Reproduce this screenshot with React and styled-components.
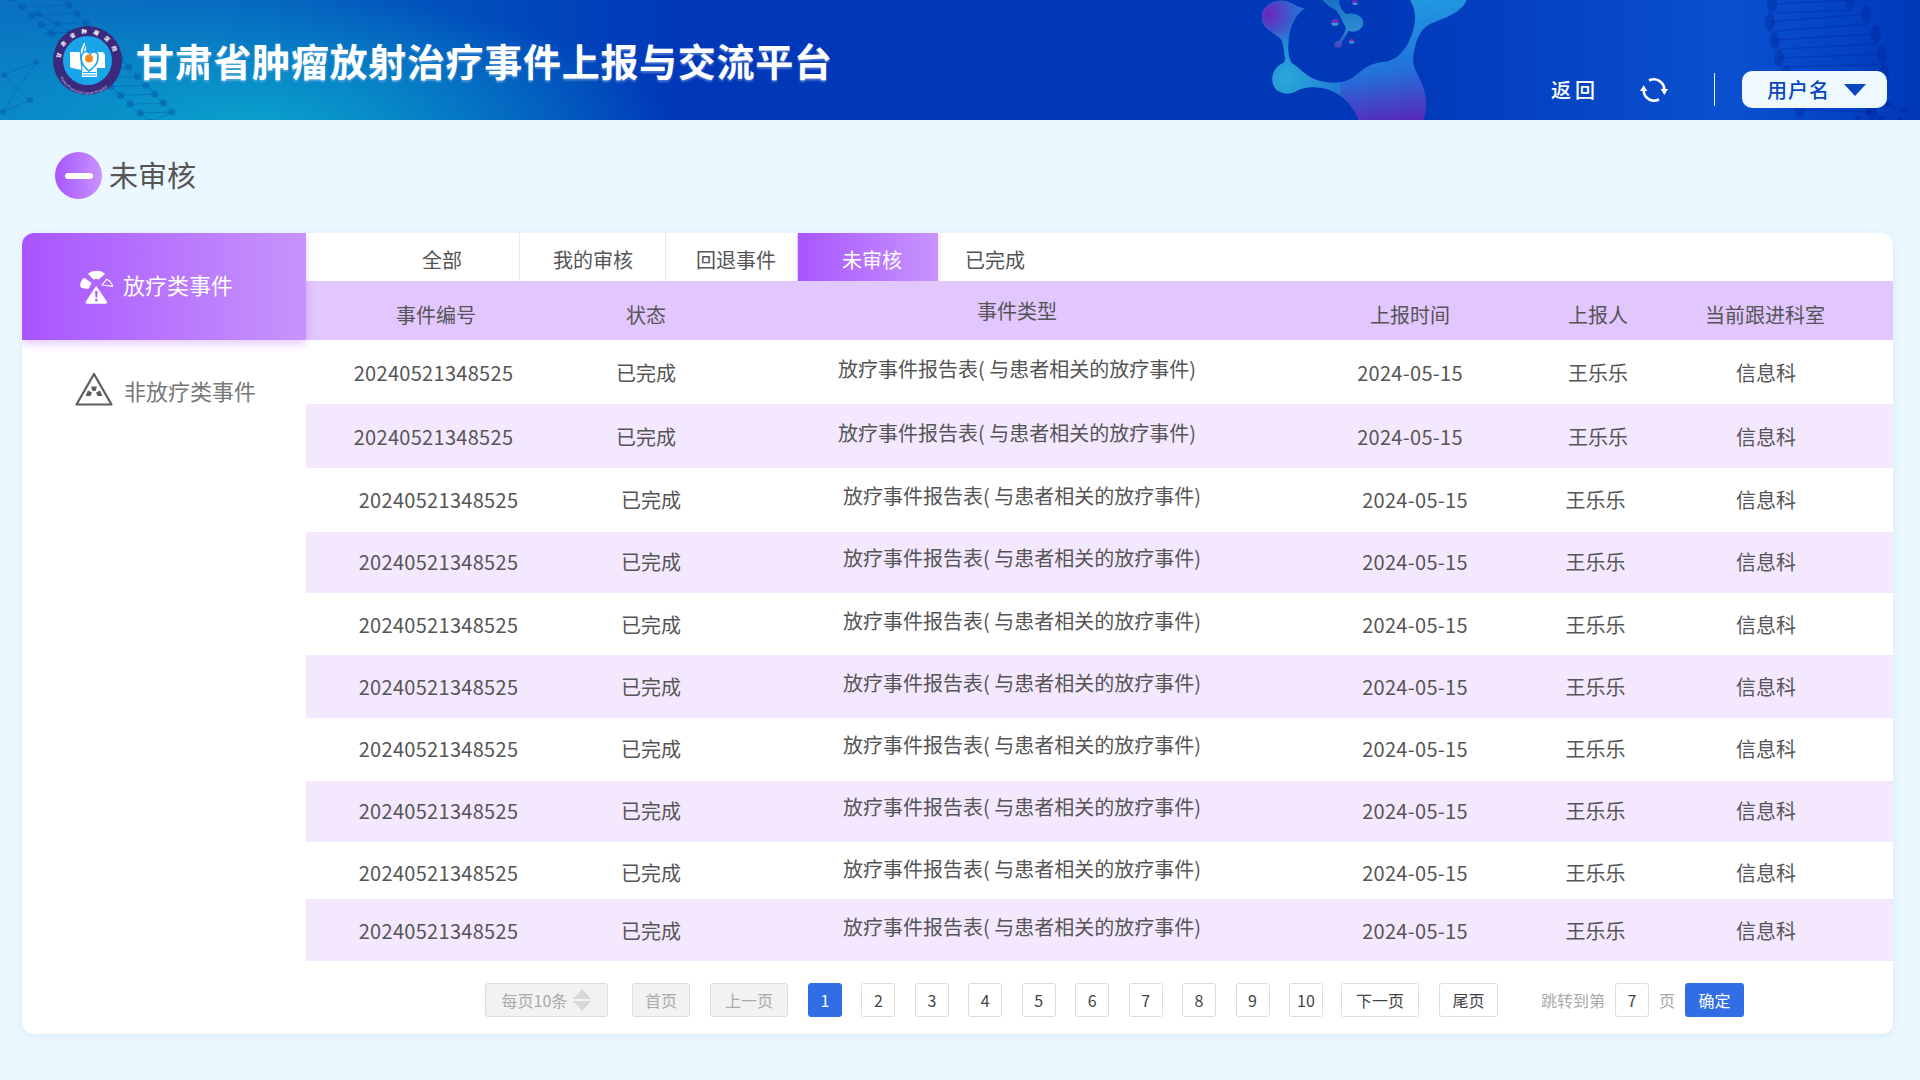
import React from "react";
import styled, { createGlobalStyle } from "styled-components";

const Global = createGlobalStyle`
  html, body { margin: 0; padding: 0; background: #ecf8ff; }
  body { font-family: "Noto Sans CJK SC", "Noto Sans", sans-serif; color: #555; }
  * { box-sizing: border-box; }
`;

const Page = styled.div`
  width: 1920px;
  height: 1080px;
  background: #ecf8ff;
  overflow: hidden;
  display: flex;
  flex-direction: column;
`;

const Header = styled.header`
  position: relative;
  height: 120px;
  flex: none;
  display: flex;
  align-items: center;
  justify-content: space-between;
  padding: 0 33px 0 53px;
  overflow: hidden;
  background:
    radial-gradient(ellipse 420px 130px at 250px 125px, rgba(10, 165, 205, 0.95) 0%, rgba(10, 150, 200, 0) 100%),
    linear-gradient(90deg, #0a74c2 0, #0566bf 260px, #0048bb 520px, #0038b8 680px, #0038b8 1380px, #0a50ce 1730px, #0549ca 1800px, #0038b8 1920px);
`;

const HeaderArt = styled.svg`
  position: absolute;
  left: 0;
  top: 0;
  width: 1920px;
  height: 120px;
`;

const Brand = styled.div`
  position: relative;
  display: flex;
  align-items: center;
  gap: 14px;
`;

const Title = styled.h1`
  margin: 0;
  font-size: 38px;
  line-height: 50px;
  font-weight: 700;
  letter-spacing: 0.7px;
  color: #fff;
  text-shadow: 0 2px 2px rgba(210, 220, 255, 0.35);
`;

const HeaderActions = styled.div`
  position: relative;
  align-self: flex-end;
  display: flex;
  align-items: center;
  height: 37px;
  margin-bottom: 12px;
`;

const BackLink = styled.span`
  width: 89px;
  color: #fff;
  font-size: 20px;
  letter-spacing: 4px;
  font-weight: 500;
`;

const Divider = styled.span`
  width: 1px;
  height: 33px;
  margin: 0 27px 0 46px;
  background: #eaf4ff;
`;

const UserButton = styled.button`
  width: 145px;
  height: 37px;
  border: 0;
  border-radius: 10px;
  background: #eef8ff;
  color: #0b46b8;
  font: 500 20px "Noto Sans CJK SC", sans-serif;
  letter-spacing: 1px;
  display: flex;
  align-items: center;
  padding: 0 0 0 25px;
  gap: 14px;
`;

const Caret = styled.span`
  width: 0;
  height: 0;
  border-left: 11px solid transparent;
  border-right: 11px solid transparent;
  border-top: 12px solid #0b46c0;
`;

const PageHead = styled.div`
  height: 113px;
  flex: none;
  display: flex;
  align-items: center;
  padding: 0 0 2px 55px;
  gap: 7px;
`;

const MinusBadge = styled.span`
  width: 47px;
  height: 47px;
  border-radius: 50%;
  background: linear-gradient(90deg, #a855ff, #c794fb);
  display: flex;
  align-items: center;
  justify-content: center;
  &::after {
    content: "";
    width: 28px;
    height: 6px;
    border-radius: 3px;
    background: #fff;
  }
`;

const PageTitle = styled.h2`
  margin: 0 0 3px;
  font-size: 29px;
  font-weight: 400;
  color: #555;
`;

const Card = styled.main`
  width: 1871px;
  height: 801px;
  margin-left: 22px;
  background: #fff;
  border-radius: 12px;
  box-shadow: 0 2px 8px rgba(120, 170, 230, 0.18);
  display: flex;
  overflow: hidden;
`;

const Sidebar = styled.nav`
  width: 284px;
  flex: none;
`;

const SideItem = styled.div`
  position: relative;
  z-index: 1;
  height: ${(p) => (p.$active ? "107px" : "99px")};
  display: flex;
  align-items: center;
  padding-left: ${(p) => (p.$active ? "57px" : "53px")};
  gap: ${(p) => (p.$active ? "9px" : "11px")};
  font-size: 22px;
  color: ${(p) => (p.$active ? "#fff" : "#777")};
  background: ${(p) => (p.$active ? "linear-gradient(90deg, #a855ff, #c794fb)" : "transparent")};
  box-shadow: ${(p) => (p.$active ? "0 4px 8px rgba(168, 85, 255, 0.3)" : "none")};
`;

const SideLabel = styled.span`
  margin-bottom: ${(p) => (p.$lift ? `${p.$lift}px` : "0")};
`;

const Content = styled.section`
  flex: 1;
  min-width: 0;
  display: flex;
  flex-direction: column;
`;

const Tabs = styled.div`
  height: 48px;
  flex: none;
  display: flex;
`;

const Tab = styled.div`
  width: ${(p) => p.$w}px;
  padding-left: ${(p) => p.$pad}px;
  padding-top: 5px;
  display: flex;
  align-items: center;
  font-size: 20px;
  color: ${(p) => (p.$active ? "#fff" : "#555")};
  border-right: ${(p) => (p.$active || p.$last ? "0" : "1px solid #e0eaf5")};
  background: ${(p) => (p.$active ? "linear-gradient(90deg, #a855ff, #c794fb)" : "transparent")};
  box-shadow: ${(p) => (p.$active ? "0 2px 6px rgba(168, 85, 255, 0.25)" : "none")};
`;

const Row = styled.div`
  height: ${(p) => p.$h}px;
  display: grid;
  grid-template-columns: 255px 170px 572px 214px 164px 166px 46px;
  align-items: center;
  font-size: 20px;
  color: #555;
  background: ${(p) => (p.$head ? "#e2c6fe" : p.$alt ? "#f4e8ff" : "#fff")};
  padding-top: ${(p) => (p.$head ? "8px" : p.$dy > 0 ? `${p.$dy * 2}px` : "0")};
  padding-bottom: ${(p) => (p.$dy < 0 ? `${-p.$dy * 2}px` : "0")};
`;

const Cell = styled.div`
  text-align: center;
  white-space: nowrap;
  padding-left: ${(p) => (p.$shift ? "10px" : "0")};
  margin-left: ${(p) => (p.$nudge ? `${p.$nudge}px` : "0")};
`;

const NumberCell = styled(Cell)`
  letter-spacing: 0.3px;
`;

const TypeCell = styled(Cell)`
  padding-bottom: ${(p) => (p.$head ? "9px" : "8px")};
`;

const Pager = styled.div`
  flex: 1;
  display: flex;
  align-items: flex-start;
  padding: 22px 0 0 179px;
  font-size: 16px;
  gap: 20px;
`;

const PageNumbers = styled.div`
  display: flex;
  gap: 19.45px;
`;

const PageBtn = styled.span`
  height: 34px;
  min-width: 34px;
  width: ${(p) => (p.$w ? `${p.$w}px` : "34px")};
  margin-left: ${(p) => (p.$ml ? `${p.$ml}px` : "0")};
  display: flex;
  align-items: center;
  justify-content: center;
  gap: 6px;
  border-radius: 3px;
  border: 1px solid ${(p) => (p.$active ? "#316ee6" : "#ddd")};
  background: ${(p) => (p.$active ? "#316ee6" : p.$off ? "#f2f2f2" : "#fff")};
  color: ${(p) => (p.$active ? "#fff" : p.$off ? "#aaa" : "#444")};
`;

const SelectArrows = styled.span`
  display: flex;
  flex-direction: column;
  gap: 2px;
  &::before,
  &::after {
    content: "";
    width: 0;
    height: 0;
    border-left: 9px solid transparent;
    border-right: 9px solid transparent;
  }
  &::before { border-bottom: 10px solid #d8d8d8; }
  &::after { border-top: 10px solid #d8d8d8; }
`;

const JumpLabel = styled.span`
  height: 34px;
  line-height: 34px;
  color: #aaa;
`;

const JumpGroup = styled.div`
  display: flex;
  gap: 10px;
  margin-left: 23px;
`;

const Confirm = styled.span`
  width: 59px;
  height: 34px;
  border-radius: 3px;
  background: #316ee6;
  color: #fff;
  display: flex;
  align-items: center;
  justify-content: center;
`;

const rows = [
  { h: 64, dy: 0 },
  { h: 64, dy: 0 },
  { h: 64, dy: -1 },
  { h: 61, dy: -1 },
  { h: 62, dy: 0 },
  { h: 63, dy: 0 },
  { h: 63, dy: -1 },
  { h: 61, dy: -1 },
  { h: 57, dy: 2 },
  { h: 62, dy: 0 },
];
const eventName = "放疗事件报告表( 与患者相关的放疗事件)";

const along = (x1, y1, x2, y2, n) =>
  Array.from({ length: n }, (_, i) => [x1 + ((x2 - x1) * i) / (n - 1), y1 + ((y2 - y1) * i) / (n - 1)]);

function Art() {
  const strandA = along(12, -2, 150, 122, 15);
  const strandB = along(60, -4, 172, 112, 14);
  const nodes = [[4, 75], [30, 100], [3, 112], [36, 62], [58, 24], [38, 14], [70, 32]];
  const rightA = [[1772, 4], [1770, 22], [1775, 40], [1779, 58], [1786, 74], [1792, 92], [1800, 110]];
  const rightB = [[1850, 0], [1866, 14], [1876, 34], [1882, 54], [1884, 74], [1880, 94], [1872, 112]];
  const netR = [[1868, 112], [1888, 104], [1905, 110], [1880, 119], [1900, 120], [1858, 118]];
  return (
    <HeaderArt viewBox="0 0 1920 120" aria-hidden="true">
      <defs>
        <linearGradient id="blobMain" gradientUnits="userSpaceOnUse" x1="520" y1="0" x2="570" y2="360">
          <stop offset="0" stopColor="#219ae0" />
          <stop offset="0.55" stopColor="#2272dc" />
          <stop offset="1" stopColor="#5a25b8" />
        </linearGradient>
        <radialGradient id="blobPurple" gradientUnits="userSpaceOnUse" cx="85" cy="40" r="110">
          <stop offset="0" stopColor="#6a25bc" />
          <stop offset="1" stopColor="#6a25bc" stopOpacity="0" />
        </radialGradient>
        <radialGradient id="blobTeal" gradientUnits="userSpaceOnUse" cx="140" cy="235" r="150">
          <stop offset="0" stopColor="#2aa8d8" />
          <stop offset="1" stopColor="#2aa8d8" stopOpacity="0" />
        </radialGradient>
        <linearGradient id="tealTop" x1="0" y1="0" x2="0" y2="1">
          <stop offset="0" stopColor="#1a6fc6" />
          <stop offset="0.6" stopColor="#2a8ccf" />
          <stop offset="1" stopColor="#4a3fc0" />
        </linearGradient>
        <linearGradient id="dropDot" x1="0" y1="0" x2="0" y2="1">
          <stop offset="0" stopColor="#7a2cc0" />
          <stop offset="0.5" stopColor="#7a2cc0" />
          <stop offset="0.55" stopColor="#3a9ad0" />
          <stop offset="1" stopColor="#3a9ad0" />
        </linearGradient>
        <clipPath id="blobClip">
          <path d="M66,50 C66,20 95,2 125,2 C160,4 170,25 195,25 C165,40 145,90 145,130 C143,150 145,175 155,190 C175,200 200,235 240,243 C290,256 330,245 360,215 C385,195 410,185 440,185 C480,175 505,140 520,90 C530,50 525,25 510,0 L680,0 C665,40 610,55 570,72 C535,90 520,140 520,190 C525,220 560,260 558,310 C558,330 555,350 552,360 L355,360 C340,320 310,285 270,270 C235,258 200,258 175,270 C155,282 130,285 110,270 C90,250 95,215 115,198 C125,190 135,190 135,180 C135,160 130,135 125,120 C105,95 66,90 66,50 Z" />
        </clipPath>
      </defs>

      <g fill="none" stroke="rgba(5,85,170,0.4)" strokeWidth="1">
        {strandA.map(([x, y], i) => {
          const [bx, by] = strandB[i] || strandB[strandB.length - 1];
          return <line key={i} x1={x} y1={y} x2={bx} y2={by} />;
        })}
        <polyline points={strandA.map((p) => p.join(",")).join(" ")} />
        <polyline points={strandB.map((p) => p.join(",")).join(" ")} />
        <polygon points="4,75 30,100 3,112 36,62" />
        <polygon points="38,14 58,24 46,34 70,32" />
      </g>
      <g fill="rgba(5,85,170,0.45)">
        {[...strandA, ...strandB].map(([x, y], i) => (
          <circle key={i} cx={x} cy={y} r="3.6" />
        ))}
        {nodes.map(([x, y], i) => (
          <circle key={i} cx={x} cy={y} r="3" />
        ))}
      </g>

      <g transform="translate(1240 0) scale(0.3333)">
        <g clipPath="url(#blobClip)">
          <rect x="0" y="0" width="700" height="360" fill="url(#blobMain)" />
          <rect x="0" y="0" width="300" height="360" fill="#1f7fd6" />
          <rect x="0" y="0" width="700" height="360" fill="url(#blobPurple)" />
          <rect x="0" y="0" width="700" height="360" fill="url(#blobTeal)" />
        </g>
        <path d="M248,0 L298,0 C296,15 305,30 318,42 C345,35 372,50 370,70 C368,92 340,100 325,92 C318,108 310,118 305,128 C310,140 296,148 286,142 C278,134 285,122 298,122 C308,110 314,98 318,85 C308,65 300,45 290,32 C278,24 258,15 248,0 Z" fill="url(#tealTop)" />
        <ellipse cx="345" cy="8" rx="8" ry="7" fill="url(#dropDot)" />
        <ellipse cx="285" cy="68" rx="11" ry="10" fill="url(#dropDot)" />
        <ellipse cx="335" cy="124" rx="8" ry="7" fill="url(#dropDot)" />
      </g>

      <g fill="none" stroke="rgba(0,30,140,0.28)" strokeWidth="1.5">
        {rightA.map(([x, y], i) => (
          <line key={i} x1={x} y1={y} x2={rightB[i][0]} y2={rightB[i][1]} />
        ))}
        {rightA.slice(0, 6).map(([x, y], i) => (
          <line key={i} x1={x + 6} y1={y + 9} x2={rightB[i][0] + 2} y2={rightB[i][1] + 10} />
        ))}
      </g>
      <g fill="rgba(0,30,140,0.3)">
        {[...rightA, ...rightB].map(([x, y], i) => (
          <ellipse key={i} cx={x} cy={y} rx="5" ry="9" />
        ))}
        {netR.map(([x, y], i) => (
          <circle key={i} cx={x} cy={y} r="3" />
        ))}
      </g>
      <polyline points="1868,112 1888,104 1905,110 1880,119 1888,104" fill="none" stroke="rgba(0,30,140,0.3)" />
    </HeaderArt>
  );
}

function Logo() {
  return (
    <svg width="69" height="69" viewBox="0 0 69 69" aria-hidden="true">
      <defs>
        <path id="ringTop" d="M7.5,34.5 A27,27 0 0 1 61.5,34.5" />
        <path id="ringBot" d="M4,38 A30.5,30.5 0 0 0 65,38" />
      </defs>
      <circle cx="34.5" cy="34.5" r="34.5" fill="#3b2a7c" />
      <text fontSize="5.4" fill="#fff" fontWeight="700" letterSpacing="6">
        <textPath href="#ringTop" startOffset="2">甘肃省肿瘤医院</textPath>
      </text>
      <text fontSize="3.6" fill="#cfd6f2">
        <textPath href="#ringBot" startOffset="14">Gansu Provincial Cancer Hospital</textPath>
      </text>
      <circle cx="34.5" cy="34.5" r="24.5" fill="#1aa4ea" />
      <path d="M17,26 H27 L31,17 H33 V26 H48 Q52,26 52,30 V42 H44 V51 H29 V44 L19,42 Q17,42 17,40 Z" fill="#fff" />
      <path d="M26.5,19 L29,44 M33,17 L30,26" stroke="#1aa4ea" strokeWidth="1.2" fill="none" />
      <path d="M36,45 C29,40 26,32 30,27 C33,24 36,26 37,28 C39,25 44,25 45,29 C46,35 42,41 36,45 Z" fill="#fff" stroke="#1aa4ea" strokeWidth="1.6" />
      <circle cx="36" cy="32.5" r="4" fill="#f28a22" />
      <path d="M30,46.5 H43 M30,49 H43" stroke="#1aa4ea" strokeWidth="1" />
    </svg>
  );
}

function RefreshIcon() {
  return (
    <svg width="28" height="26" viewBox="0 0 28 26" aria-hidden="true" style={{ flex: "none" }}>
      <path d="M19,22.5 A10.5,10.5 0 0 1 3.7,13 M9,3.5 A10.5,10.5 0 0 1 24.3,13" fill="none" stroke="#fff" strokeWidth="2.6" />
      <path d="M0,14 L7.4,14 L3.7,8.2 Z M20.6,12 L28,12 L24.3,18 Z" fill="#fff" />
    </svg>
  );
}

function ActiveIcon() {
  return (
    <svg width="35" height="34" viewBox="55 28 106 104" aria-hidden="true">
      <g fill="#fff">
        <path d="M82,40 C95,27 122,27 134,40 L114,58 C110,54 104,54 100,58 Z" />
        <path d="M58,76 C58,65 64,56 71,52 L93,68 L84,85 C72,85 60,85 58,76 Z" />
        <path d="M107,76 L140,125 Q141,131 136,131 L78,131 Q73,131 75,125 Z" />
      </g>
      <path d="M125,74 L139,56 C148,60 155,68 157,78 Z" fill="none" stroke="#fff" strokeWidth="3.4" strokeLinejoin="round" />
      <path d="M104,92 H111 L110,112 H105 Z" fill="#a855ff" />
      <circle cx="107.5" cy="120" r="4" fill="#a855ff" />
    </svg>
  );
}

function IdleIcon() {
  return (
    <svg width="38" height="35" viewBox="0 0 38 35" aria-hidden="true">
      <path d="M19,2 L36.5,32.5 H1.5 Z" fill="none" stroke="#5d5d5d" strokeWidth="2.2" strokeLinejoin="round" />
      <g fill="#5d5d5d">
        <path d="M16,14.5 H22 L20.5,19 H17.5 Z" />
        <path d="M10.5,24 H15.5 L17,20.5 L13,18.5 Z" />
        <path d="M27.5,24 H22.5 L21,20.5 L25,18.5 Z" />
      </g>
    </svg>
  );
}

export default function App() {
  return (
    <Page>
      <Global />
      <Header>
        <Art />
        <Brand>
          <Logo />
          <Title>甘肃省肿瘤放射治疗事件上报与交流平台</Title>
        </Brand>
        <HeaderActions>
          <BackLink>返回</BackLink>
          <RefreshIcon />
          <Divider />
          <UserButton>
            用户名
            <Caret />
          </UserButton>
        </HeaderActions>
      </Header>

      <PageHead>
        <MinusBadge />
        <PageTitle>未审核</PageTitle>
      </PageHead>

      <Card>
        <Sidebar>
          <SideItem $active>
            <ActiveIcon />
            <SideLabel $lift={5}>放疗类事件</SideLabel>
          </SideItem>
          <SideItem>
            <IdleIcon />
            <SideLabel>非放疗类事件</SideLabel>
          </SideItem>
        </Sidebar>
        <Content>
          <Tabs>
            <Tab $w={214} $pad={116}>全部</Tab>
            <Tab $w={146} $pad={33}>我的审核</Tab>
            <Tab $w={132} $pad={30}>回退事件</Tab>
            <Tab $w={140} $pad={44} $active>未审核</Tab>
            <Tab $w={200} $pad={27} $last>已完成</Tab>
          </Tabs>
          <Row $head $h={59}>
            <Cell $nudge={5}>事件编号</Cell>
            <Cell>状态</Cell>
            <TypeCell $head>事件类型</TypeCell>
            <Cell>上报时间</Cell>
            <Cell $nudge={-2}>上报人</Cell>
            <Cell $nudge={2}>当前跟进科室</Cell>
          </Row>
          {rows.map(({ h, dy }, i) => {
            const shift = i > 1;
            return (
              <Row key={i} $h={h} $dy={dy} $alt={i % 2 === 1}>
                <NumberCell $shift={shift}>20240521348525</NumberCell>
                <Cell $shift={shift}>已完成</Cell>
                <TypeCell $shift={shift}>{eventName}</TypeCell>
                <NumberCell $shift={shift}>2024-05-15</NumberCell>
                <Cell $nudge={shift ? -7 : -2}>王乐乐</Cell>
                <Cell $nudge={4}>信息科</Cell>
              </Row>
            );
          })}
          <Pager>
            <PageBtn $off $w={123}>
              每页10条
              <SelectArrows />
            </PageBtn>
            <PageBtn $off $w={58} $ml={4}>首页</PageBtn>
            <PageBtn $off $w={78}>上一页</PageBtn>
            <PageNumbers>
              {[1, 2, 3, 4, 5, 6, 7, 8, 9, 10].map((n) => (
                <PageBtn key={n} $active={n === 1}>{n}</PageBtn>
              ))}
            </PageNumbers>
            <PageBtn $w={78} $ml={-2}>下一页</PageBtn>
            <PageBtn $w={59}>尾页</PageBtn>
            <JumpGroup>
              <JumpLabel>跳转到第</JumpLabel>
              <PageBtn>7</PageBtn>
              <JumpLabel>页</JumpLabel>
              <Confirm>确定</Confirm>
            </JumpGroup>
          </Pager>
        </Content>
      </Card>
    </Page>
  );
}
